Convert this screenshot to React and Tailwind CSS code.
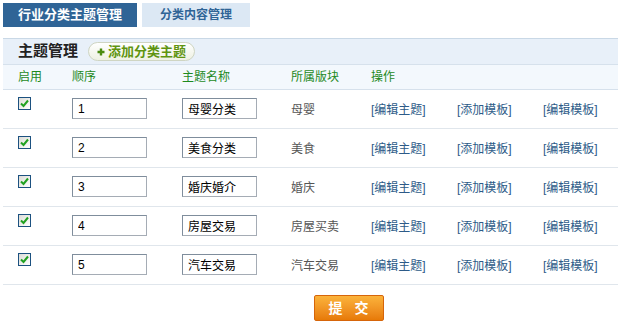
import React from "react";

const rows = [
  { order: "1", name: "母婴分类", board: "母婴" },
  { order: "2", name: "美食分类", board: "美食" },
  { order: "3", name: "婚庆婚介", board: "婚庆" },
  { order: "4", name: "房屋交易", board: "房屋买卖" },
  { order: "5", name: "汽车交易", board: "汽车交易" },
];

const cols = "grid grid-cols-[54px_110px_109px_80px_86px_86px_1fr] pl-[15px]";

const Checkbox = () => (
  <span className="flex h-[13px] w-[13px] items-center justify-center border border-[#1c5180] bg-gradient-to-br from-[#dcdcd6] to-white">
    <svg width="9" height="9" viewBox="0 0 9 9">
      <path d="M1 4.5 L3.5 7 L8 1.5" fill="none" stroke="#21a121" strokeWidth="2" />
    </svg>
  </span>
);

const TextBox = ({ value }) => (
  <input
    defaultValue={value}
    className="h-[21px] w-[75px] border border-[#a5acb5] border-t-[#7f8d9c] border-l-[#7f8d9c] bg-white px-[5px] text-[12px] text-black outline-none"
  />
);

export default function App() {
  return (
    <div className="h-[333px] w-[618px] bg-white font-['Liberation_Sans','Noto_Sans_CJK_SC',sans-serif] text-[12px]">
      <div className="flex gap-[5px] pl-[3px] pt-[3px]">
        <div className="flex h-[24px] w-[134px] items-center justify-center bg-[#2f6496] text-[13px] font-bold text-white">
          行业分类主题管理
        </div>
        <div className="flex h-[24px] w-[108px] items-center justify-center bg-[#dce8f4] font-bold text-[#2f6496]">
          分类内容管理
        </div>
      </div>

      <div className="ml-[3px] mt-[11px]">
        <div className="flex h-[26px] items-center gap-[10px] border-t border-[#c9d8e6] bg-[#e8f0f9] pl-[15px]">
          <span className="text-[15px] font-bold text-[#222]">主题管理</span>
          <button className="flex h-[19px] items-center gap-[3px] rounded-full border border-[#cfd5c2] bg-gradient-to-b from-white to-[#eef1e3] px-[8px] text-[13px] font-bold text-[#5f9410]">
            <svg width="8" height="8" viewBox="0 0 8 8">
              <path d="M4 0.5 V7.5 M0.5 4 H7.5" stroke="#4a8a10" strokeWidth="2.4" />
            </svg>
            添加分类主题
          </button>
        </div>

        <div className={`${cols} h-[26px] items-center border-y border-[#d6e1ec] bg-[#f3f8fd] text-[#1e8a1e]`}>
          <span>启用</span>
          <span>顺序</span>
          <span>主题名称</span>
          <span>所属版块</span>
          <span>操作</span>
        </div>

        {rows.map((r) => (
          <div key={r.order} className={`${cols} h-[39px] items-start border-b border-[#e0e6ec] text-[#555]`}>
            <span className="pt-[7px]">
              <Checkbox />
            </span>
            <span className="pt-[8px]">
              <TextBox value={r.order} />
            </span>
            <span className="pt-[8px]">
              <TextBox value={r.name} />
            </span>
            <span className="pt-[11px]">{r.board}</span>
            <span className="pt-[11px] text-[#2d5b88]">[编辑主题]</span>
            <span className="pt-[11px] text-[#2d5b88]">[添加模板]</span>
            <span className="pt-[11px] text-[#2d5b88]">[编辑模板]</span>
          </div>
        ))}

        <div className="flex pl-[311px] pt-[10px]">
          <button className="h-[26px] w-[70px] rounded-[2px] border border-[#d6650a] bg-gradient-to-b from-[#fbb33a] to-[#e77a06] pl-[3px] text-[14px] font-bold tracking-[4px] text-white">
            提 交
          </button>
        </div>
      </div>
    </div>
  );
}
